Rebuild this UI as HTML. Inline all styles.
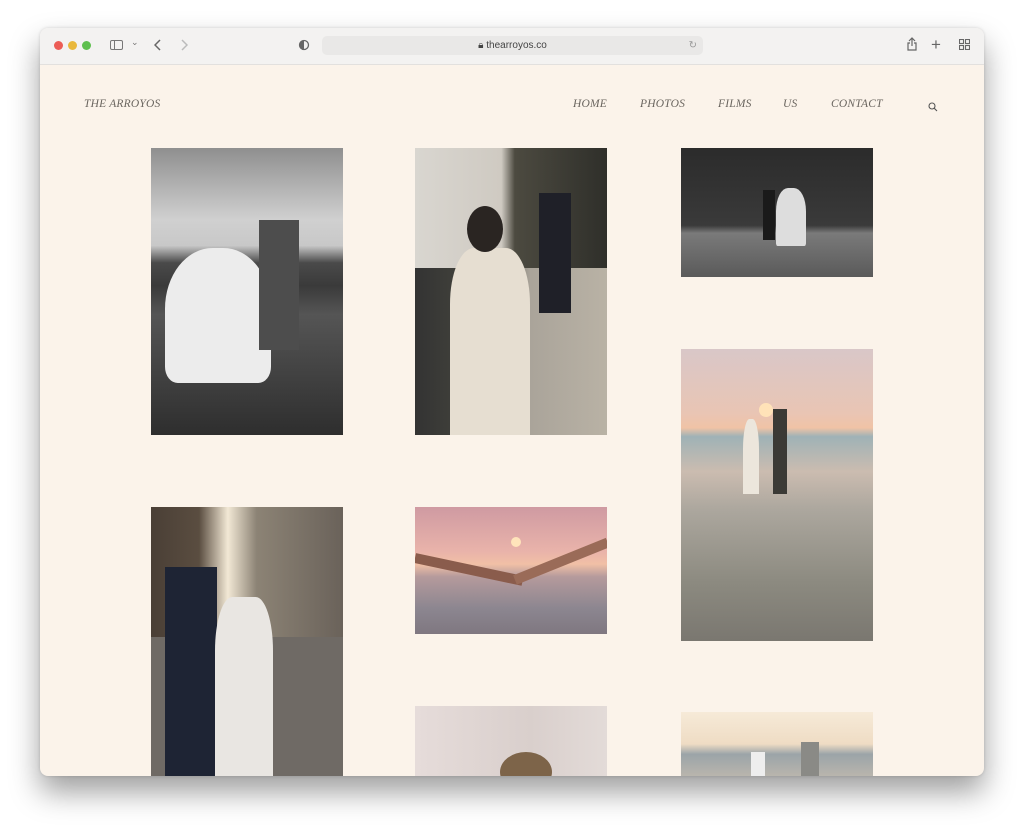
<!DOCTYPE html>
<html><head><meta charset="utf-8"><style>
*{margin:0;padding:0;box-sizing:border-box}
body{width:1024px;height:829px;background:#fff;position:relative;overflow:hidden;font-family:"Liberation Sans",sans-serif}
.win{position:absolute;left:40px;top:28px;width:944px;height:748px;border-radius:8px;overflow:hidden;background:#fbf3ea;box-shadow:0 16px 30px rgba(0,0,0,.38),0 0 3px rgba(0,0,0,.15)}
.bar{position:absolute;left:0;top:0;width:944px;height:37px;background:#f3f2f1;border-bottom:1px solid #e2e0de}
.dot{position:absolute;top:13px;width:9px;height:9px;border-radius:50%}
.url{position:absolute;left:282px;top:8px;width:381px;height:19px;background:#e9e8e7;border-radius:5px;font-size:10px;color:#444;text-align:center;line-height:19px}
.ic{position:absolute;color:#777;font-size:13px}
.logo{position:absolute;left:44px;top:70px;font-family:"Liberation Serif",serif;font-style:italic;font-size:11.5px;color:#6a655f;letter-spacing:.2px}
.nav{position:absolute;top:70px;font-family:"Liberation Serif",serif;font-style:italic;font-size:11.5px;color:#6a655f;letter-spacing:.2px}
.p{position:absolute;overflow:hidden}
.f{position:absolute}
</style></head><body>
<div class="win">
<div class="bar">
<div class="dot" style="left:14px;background:#ec5d56"></div>
<div class="dot" style="left:28px;background:#e9b83c"></div>
<div class="dot" style="left:42px;background:#5fc04f"></div>
<div style="position:absolute;left:70px;top:12px;width:13px;height:10px;border:1.3px solid #777;border-radius:2px"><div style="position:absolute;left:3px;top:0;width:1.3px;height:8px;background:#777"></div></div>
<div class="ic" style="left:91px;top:9px;font-size:9px">⌄</div>
<svg style="position:absolute;left:114px;top:11px" width="8" height="12"><path d="M6 1L1 6L6 11" fill="none" stroke="#666" stroke-width="1.5"/></svg>
<svg style="position:absolute;left:140px;top:11px" width="8" height="12"><path d="M2 1L7 6L2 11" fill="none" stroke="#bbb" stroke-width="1.5"/></svg>
<svg style="position:absolute;left:258px;top:11px" width="12" height="12"><circle cx="6" cy="6" r="4.5" fill="none" stroke="#666" stroke-width="1.3"/><path d="M6 1.5A4.5 4.5 0 0 0 6 10.5Z" fill="#666"/></svg>
<div class="url">🔒︎ thearroyos.co<span style="position:absolute;right:6px;color:#999">↻</span></div>
<svg style="position:absolute;left:866px;top:9px" width="12" height="15"><path d="M6 1V9M3 4L6 1L9 4M4 6H2V13H10V6H8" fill="none" stroke="#666" stroke-width="1.2"/></svg>
<div class="ic" style="left:891px;top:7px;font-size:17px;color:#666">+</div>
<svg style="position:absolute;left:919px;top:11px" width="11" height="11"><g fill="none" stroke="#666" stroke-width="1.1"><rect x=".5" y=".5" width="4" height="4"/><rect x="6.5" y=".5" width="4" height="4"/><rect x=".5" y="6.5" width="4" height="4"/><rect x="6.5" y="6.5" width="4" height="4"/></g></svg>
</div>
<div class="logo">THE ARROYOS</div>
<div class="nav" style="left:533px">HOME</div>
<div class="nav" style="left:600px">PHOTOS</div>
<div class="nav" style="left:678px">FILMS</div>
<div class="nav" style="left:743px">US</div>
<div class="nav" style="left:791px">CONTACT</div>
<svg style="position:absolute;left:888px;top:74px" width="10" height="10"><circle cx="4" cy="4" r="3" fill="none" stroke="#555" stroke-width="1.1"/><path d="M6.3 6.3L9 9" stroke="#555" stroke-width="1.1"/></svg>

<div class="p" style="left:111px;top:120px;width:192px;height:287px;background:linear-gradient(#8f8f8f 0%,#d0d0d0 25%,#c8c8c8 34%,#4a4a4a 40%,#3a3a3a 48%,#555 58%,#2e2e2e 100%)">
<div class="f" style="left:14px;top:100px;width:106px;height:135px;background:#ececec;border-radius:45% 45% 12% 12%"></div>
<div class="f" style="left:108px;top:72px;width:40px;height:130px;background:#4d4d4d"></div>
</div>
<div class="p" style="left:375px;top:120px;width:192px;height:287px;background:linear-gradient(90deg,#d9d6d0 0%,#cfcac2 45%,#4c4a40 52%,#2f2f2a 100%)">
<div class="f" style="left:0;top:120px;width:192px;height:167px;background:linear-gradient(90deg,#333 0%,#4a4a40 40%,#aaa49a 60%,#b9b2a5 100%)"></div>
<div class="f" style="left:124px;top:45px;width:32px;height:120px;background:#1f2028"></div>
<div class="f" style="left:35px;top:100px;width:80px;height:187px;background:#e6ded1;border-radius:30% 30% 0 0"></div>
<div class="f" style="left:52px;top:58px;width:36px;height:46px;background:#2a2522;border-radius:50%"></div>
</div>
<div class="p" style="left:641px;top:120px;width:192px;height:129px;background:linear-gradient(#2b2b2b 0%,#3a3a3a 60%,#7a7a7a 66%,#5a5a5a 100%)">
<div class="f" style="left:95px;top:40px;width:30px;height:58px;background:#ddd;border-radius:40% 40% 5% 5%"></div>
<div class="f" style="left:82px;top:42px;width:12px;height:50px;background:#1a1a1a"></div>
</div>
<div class="p" style="left:641px;top:321px;width:192px;height:292px;background:linear-gradient(#d9c7c8 0%,#e9c5b4 22%,#f0c3a6 27%,#9fb2b6 30%,#cbbcb0 42%,#aca79e 55%,#8c8a80 80%,#7a7770 100%)">
<div class="f" style="left:78px;top:54px;width:14px;height:14px;border-radius:50%;background:#ffe2b8"></div>
<div class="f" style="left:62px;top:70px;width:16px;height:75px;background:#ece6dc;border-radius:40% 40% 0 0"></div>
<div class="f" style="left:92px;top:60px;width:14px;height:85px;background:#3b3a36"></div>
</div>
<div class="p" style="left:111px;top:479px;width:192px;height:269px;background:linear-gradient(90deg,#4a3f36 0%,#5a4d40 25%,#f2e8d5 40%,#8c8375 55%,#6a625a 100%)">
<div class="f" style="left:0;top:130px;width:192px;height:139px;background:#6f6a65"></div>
<div class="f" style="left:14px;top:60px;width:52px;height:209px;background:#1e2434"></div>
<div class="f" style="left:64px;top:90px;width:58px;height:179px;background:#e9e6e2;border-radius:30% 30% 0 0"></div>
</div>
<div class="p" style="left:375px;top:479px;width:192px;height:127px;background:linear-gradient(#cf9aa2 0%,#e9b3aa 35%,#f1c0a6 45%,#b59a9c 55%,#8c8690 80%,#7f7780 100%)">
<div class="f" style="left:96px;top:30px;width:10px;height:10px;border-radius:50%;background:#ffe4bb"></div>
<div class="f" style="left:0;top:46px;width:110px;height:10px;background:#8a5c4c;transform:rotate(12deg);transform-origin:left"></div>
<div class="f" style="left:100px;top:68px;width:100px;height:10px;background:#9a6b58;transform:rotate(-22deg);transform-origin:left"></div>
</div>
<div class="p" style="left:375px;top:678px;width:192px;height:70px;background:linear-gradient(90deg,#e6dcda,#d9cfcc 60%,#e3dbd8)">
<div class="f" style="left:85px;top:46px;width:52px;height:40px;border-radius:50%;background:#7d6449"></div>
</div>
<div class="p" style="left:641px;top:684px;width:192px;height:64px;background:linear-gradient(#f6ead8 0%,#efdcc4 50%,#9ba4a8 66%,#b9b5ad 100%)">
<div class="f" style="left:70px;top:40px;width:14px;height:24px;background:#eee"></div>
<div class="f" style="left:120px;top:30px;width:18px;height:34px;background:#8a8a86"></div>
</div>
</div>
</body></html>
